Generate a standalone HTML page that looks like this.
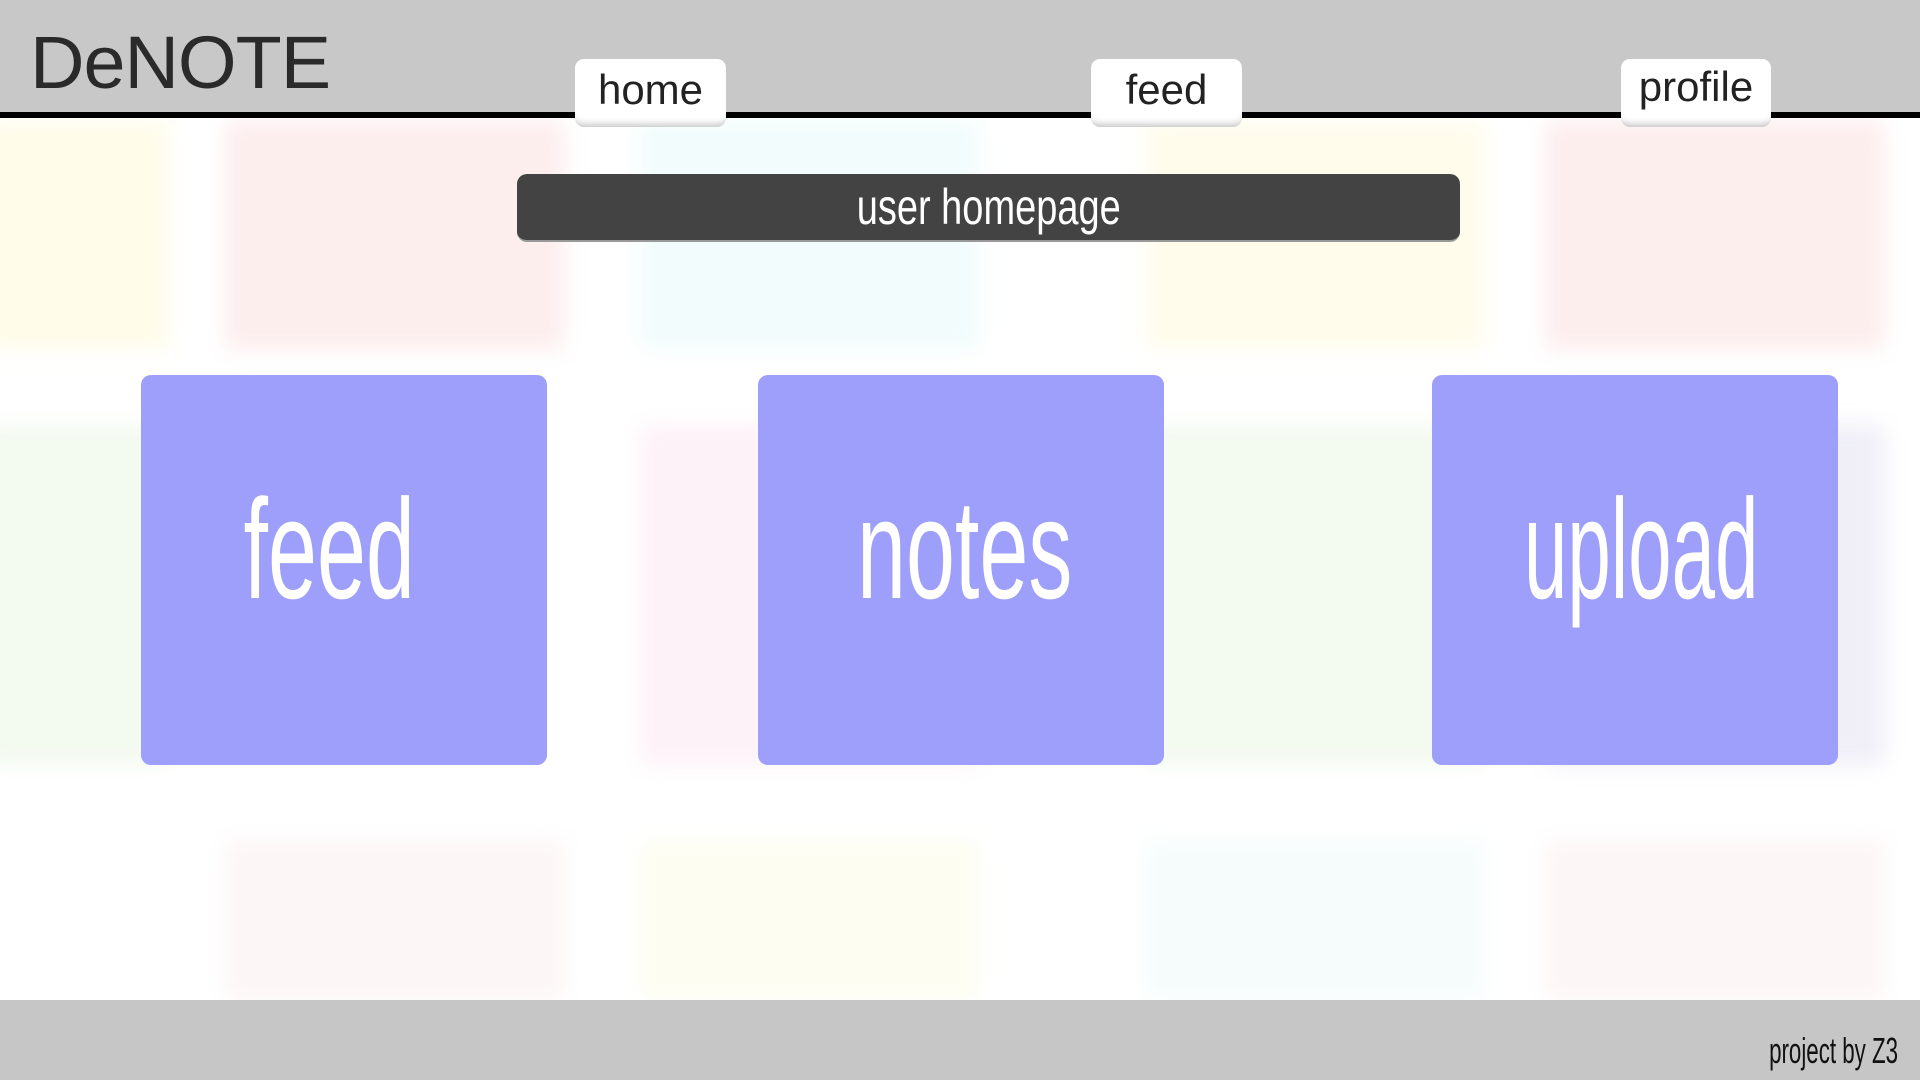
<!DOCTYPE html>
<html><head><meta charset="utf-8"><style>
html,body{margin:0;padding:0;width:1920px;height:1080px;overflow:hidden;background:#fff;font-family:"Liberation Sans",sans-serif}
.bg{position:absolute;filter:blur(10px);border-radius:8px}
header{position:absolute;left:0;top:0;width:1920px;height:112px;background:#c8c8c8;border-bottom:6px solid #000}
.logo{position:absolute;left:30px;top:20px;font-size:74px;font-weight:300;color:#2a2a2a;letter-spacing:-1px;transform:scaleX(1.02);transform-origin:left}
.tab{position:absolute;top:59px;height:68px;background:#fff;border-radius:9px;text-align:center;font-size:42px;color:#222;line-height:62px;box-shadow:inset 0 -10px 8px -8px #bbb}
.bar{position:absolute;left:517px;top:174px;width:943px;height:68px;background:#434343;border-radius:10px;color:#fff;text-align:center;font-size:50px;line-height:66px;border-bottom:2px solid #999;box-sizing:border-box}
.bar span{display:inline-block;transform:scaleX(0.76)}
.tile span,.foot span{display:inline-block;transform:scaleX(0.62)}
.tile{position:absolute;top:375px;width:406px;height:390px;background:#9d9ffa;border-radius:10px;color:#fff;text-align:center;font-size:142px;line-height:350px}
footer{position:absolute;left:0;top:1000px;width:1920px;height:80px;background:#c6c6c6}
.foot{position:absolute;right:22px;top:1030px;font-size:36px;color:#111}
.foot span{transform-origin:right}
</style></head><body>
<div class="bg" style="left:-20px;top:120px;width:190px;height:230px;background:#fffcea"></div>
<div class="bg" style="left:225px;top:120px;width:340px;height:230px;background:#fdeeee"></div>
<div class="bg" style="left:640px;top:120px;width:340px;height:230px;background:#f2fcfc"></div>
<div class="bg" style="left:1145px;top:120px;width:340px;height:230px;background:#fffcec"></div>
<div class="bg" style="left:1545px;top:120px;width:340px;height:230px;background:#fdeeee"></div>
<div class="bg" style="left:-20px;top:425px;width:190px;height:340px;background:#f3faf0"></div>
<div class="bg" style="left:640px;top:425px;width:340px;height:340px;background:#fdf2f8"></div>
<div class="bg" style="left:1145px;top:425px;width:340px;height:340px;background:#f3faf0"></div>
<div class="bg" style="left:1545px;top:425px;width:340px;height:340px;background:#f0eff8"></div>
<div class="bg" style="left:225px;top:840px;width:340px;height:160px;background:#fdf6f6"></div>
<div class="bg" style="left:640px;top:840px;width:340px;height:160px;background:#fdfdf2"></div>
<div class="bg" style="left:1145px;top:840px;width:340px;height:160px;background:#f6fcfc"></div>
<div class="bg" style="left:1545px;top:840px;width:340px;height:160px;background:#fdf6f6"></div>
<header><div class="logo">DeNOTE</div></header>
<div class="tab" style="left:575px;width:151px">home</div>
<div class="tab" style="left:1091px;width:151px">feed</div>
<div class="tab" style="left:1621px;width:150px;line-height:56px">profile</div>
<div class="bar"><span>user homepage</span></div>
<div class="tile" style="left:141px"><span style="margin-left:-30px">feed</span></div>
<div class="tile" style="left:758px"><span style="margin-left:8px">notes</span></div>
<div class="tile" style="left:1432px"><span style="transform:scaleX(0.55);margin-left:-4px">upload</span></div>
<footer></footer>
<div class="foot"><span>project by Z3</span></div>
</body></html>
